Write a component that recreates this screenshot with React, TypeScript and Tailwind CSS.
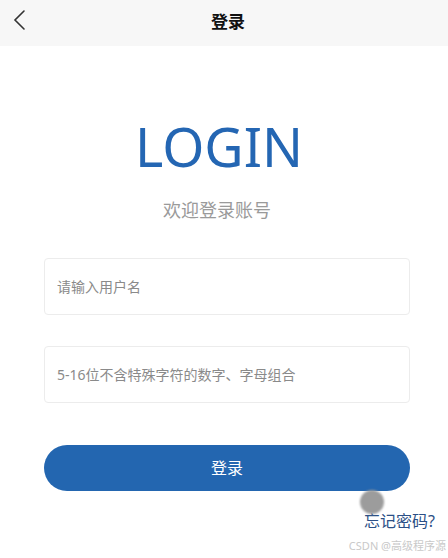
import { useState } from "react";

export default function App() {
  const [username, setUsername] = useState("");
  const [password, setPassword] = useState("");

  const cjk = { fontFamily: '"Noto Sans", "Noto Sans CJK SC", sans-serif' };

  return (
    <div className="relative w-[448px] h-[558px] bg-white overflow-hidden" style={cjk}>
      {/* Header */}
      <div className="relative h-[46px] bg-[#f7f7f7] flex items-center justify-center">
        <svg className="absolute left-[11px] top-[8px]" width="18" height="26" viewBox="0 0 18 26" fill="none">
          <polyline points="13,3 4,12 13,21" stroke="#333" strokeWidth="1.6" strokeLinecap="round" strokeLinejoin="miter" />
        </svg>
        <h1 className="text-[17px] font-bold text-[#111] leading-none -mt-[4px] ml-[8px]">登录</h1>
      </div>

      {/* Title */}
      <div className="mt-[73px] pr-[10px] text-center text-[54px] leading-none text-[#2466b3]">LOGIN</div>
      <p className="mt-[28px] pr-[14px] text-center text-[18px] leading-[18px] text-[#9a9a9a]">欢迎登录账号</p>

      {/* Form */}
      <form className="mt-[39px] pl-[44px] pr-[38px] flex flex-col" onSubmit={(e) => e.preventDefault()}>
        <input
          type="text"
          value={username}
          onChange={(e) => setUsername(e.target.value)}
          placeholder="请输入用户名"
          className="h-[57px] w-full rounded-[4px] border border-[#ececec] bg-white px-[12px] text-[14px] text-[#333] placeholder:text-[#8a8a8a] outline-none"
        />
        <input
          type="password"
          value={password}
          onChange={(e) => setPassword(e.target.value)}
          placeholder="5-16位不含特殊字符的数字、字母组合"
          className="mt-[31px] h-[57px] w-full rounded-[4px] border border-[#ececec] bg-white px-[12px] text-[14px] text-[#333] placeholder:text-[#8a8a8a] outline-none"
        />
        <button
          type="submit"
          className="mt-[42px] h-[46px] w-full rounded-full bg-[#2366b0] text-white text-[16px]"
        >
          登录
        </button>
      </form>

      {/* Forgot password */}
      <div className="relative mt-[21px] pr-[13px] flex justify-end">
        <span className="text-[16px] leading-[18px] text-[#2b4f86]">忘记密码?</span>
        <div className="absolute left-[360px] -top-[22px] w-[24px] h-[24px] rounded-full bg-[#9c9c9c] blur-[1px]" />
      </div>

      {/* Watermark */}
      <div className="absolute right-[2px] bottom-[4px] text-[11px] text-[#c9c9c9]">CSDN @高级程序源</div>
    </div>
  );
}
